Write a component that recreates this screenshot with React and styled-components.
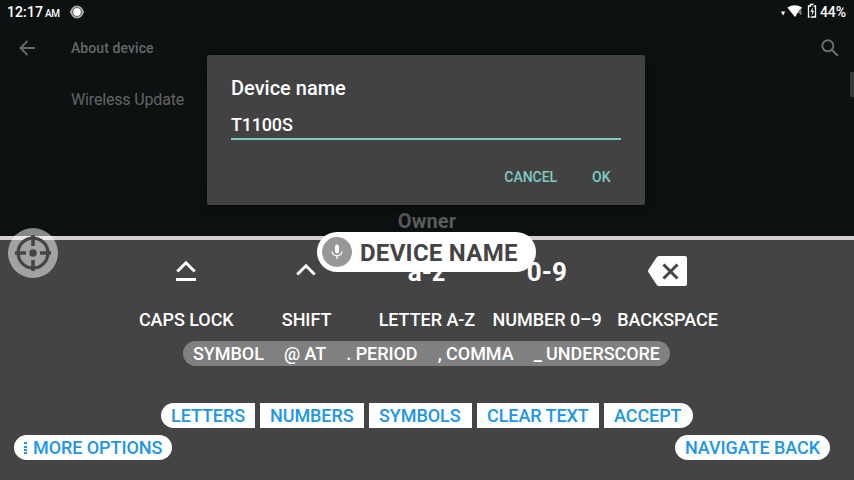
import React from "react";
import styled, { createGlobalStyle } from "styled-components";

const GlobalStyle = createGlobalStyle`
  * { box-sizing: border-box; }
  body { margin: 0; overflow: hidden; background: #0d1112; }
  button { border: 0; padding: 0; background: none; font: inherit; color: inherit; letter-spacing: inherit; }
`;

const Screen = styled.div`
  position: relative;
  width: 854px;
  height: 480px;
  overflow: hidden;
  display: flex;
  flex-direction: column;
  background: #0d1112;
  color: #fff;
  font-family: Roboto, sans-serif;
  font-weight: 500;
  white-space: nowrap;
`;

const StatusBar = styled.header`
  height: 24px;
  padding: 0 8px 0 7px;
  display: flex;
  align-items: center;
  justify-content: space-between;
`;

const StatusGroup = styled.div`
  display: flex;
  align-items: center;
  height: 24px;
`;

const Clock = styled.span`
  font-size: 14px;
  line-height: 24px;
  width: 38px;
  letter-spacing: 0.1px;
`;

const Meridiem = styled.span`
  font-size: 10px;
  line-height: 12px;
  width: 25px;
  padding-top: 3px;
  letter-spacing: -0.4px;
`;

const Battery = styled.span`
  font-size: 14px;
  line-height: 24px;
  width: 26px;
  letter-spacing: -0.1px;
`;

const AppBar = styled.div`
  height: 48px;
  display: flex;
  align-items: center;
  padding: 0 15px 0 18px;
  color: #666869;
`;

const AppTitle = styled.h1`
  flex: 1;
  margin: 0 0 0 35px;
  font-size: 14px;
  font-weight: 500;
  line-height: 20px;
  letter-spacing: 0.08px;
`;

const Settings = styled.main`
  height: 164px;
  padding: 18px 0 0 71px;
  color: #626465;
`;

const SettingRow = styled.div`
  font-size: 16px;
  font-weight: 400;
  line-height: 20px;
  letter-spacing: -0.16px;
`;

const Owner = styled.div`
  margin: 99px 0 0 -71px;
  text-align: center;
  font-size: 20px;
  font-weight: 700;
  line-height: 24px;
  letter-spacing: 0.1px;
  color: #5c5e5f;
`;

const ScrollThumb = styled.div`
  position: absolute;
  top: 72px;
  right: 0;
  width: 4px;
  height: 25px;
  background: #353839;
`;

const Dialog = styled.section`
  position: absolute;
  left: 207px;
  top: 55px;
  width: 438px;
  height: 150px;
  padding: 21px 24px 0;
  border-radius: 2px;
  background: #424242;
  box-shadow: 0 6px 18px rgba(0, 0, 0, 0.35);
`;

const DialogTitle = styled.h2`
  margin: 0;
  font-size: 20px;
  font-weight: 500;
  line-height: 24px;
`;

const Field = styled.div`
  height: 40px;
  padding-top: 14px;
  border-bottom: 2px solid #80cbc4;
  font-size: 18px;
  line-height: 22px;
  letter-spacing: -0.2px;
`;

const Actions = styled.div`
  display: flex;
  justify-content: flex-end;
  gap: 35px;
  padding: 27px 10.5px 0 0;
  color: #80cbc4;
  font-size: 14px;
  line-height: 20px;
  letter-spacing: -0.03px;
`;

const Keyboard = styled.section`
  height: 244px;
  border-top: 4px solid #d3d2d0;
  background: #444;
  display: flex;
  flex-direction: column;
  align-items: center;
`;

const KeyGrid = styled.div`
  display: grid;
  grid-template-columns: repeat(5, 120.3px);
  height: 101px;
  padding-top: 12px;
  margin-right: 1px;
`;

const Key = styled.button`
  display: flex;
  flex-direction: column;
  align-items: center;
`;

const KeyFace = styled.span`
  height: 38px;
  display: flex;
  align-items: center;
  justify-content: center;
`;

const KeyGlyph = styled.span`
  padding-top: 2px;
  font-size: 26px;
  font-weight: 700;
  line-height: 38px;
`;

const KeyLabel = styled.span`
  margin-top: 18px;
  padding-left: 0.8px;
  font-size: 18px;
  line-height: 24px;
  letter-spacing: -0.05px;
`;

const SymbolBar = styled.div`
  width: 487px;
  height: 25px;
  margin-right: 1px;
  border-radius: 13px;
  background: #808080;
  display: flex;
  justify-content: space-between;
  padding: 0 10px;
  font-size: 18px;
  line-height: 25px;
  letter-spacing: -0.05px;
`;

const ActionRow = styled.nav`
  display: flex;
  gap: 5px;
  margin-top: 37px;
`;

const FooterRow = styled.nav`
  width: 854px;
  display: flex;
  justify-content: space-between;
  padding: 0 24px 0 14px;
  margin-top: 7px;
`;

const Pill = styled.button`
  width: ${(p) => p.$width}px;
  height: 25px;
  padding-left: 10px;
  border-radius: ${(p) => p.$radius || "0"};
  background: #fff;
  color: #2196e8;
  display: flex;
  align-items: center;
  gap: 6px;
  font-size: 18px;
  line-height: 25px;
  letter-spacing: -0.07px;
`;

const VoicePill = styled.div`
  position: absolute;
  left: 317px;
  top: 232px;
  width: 219px;
  height: 40px;
  padding-left: 5px;
  border-radius: 20px;
  background: #fff;
  color: #444;
  display: flex;
  align-items: center;
  gap: 8px;
`;

const VoiceLabel = styled.span`
  padding-top: 2px;
  font-size: 24px;
  font-weight: 700;
  line-height: 38px;
  letter-spacing: 0.27px;
`;

const MicBadge = styled.span`
  width: 30px;
  height: 30px;
  border-radius: 50%;
  background: #979797;
  display: grid;
  place-items: center;
`;

const TargetButton = styled.button`
  position: absolute;
  left: 8px;
  top: 228px;
  width: 50px;
  height: 50px;
  border-radius: 50%;
  background: rgba(255, 255, 255, 0.5);
  display: grid;
  place-items: center;
`;

const Svg = styled.svg`
  display: block;
  flex: none;
`;

const EyeIcon = () => (
  <Svg width="14" height="14" viewBox="0 0 14 14">
    <circle cx="7" cy="7" r="5.5" fill="none" stroke="#a9abab" strokeWidth="2" />
    <path d="M0 7h2M12 7h2" stroke="#a9abab" strokeWidth="2" />
    <circle cx="7" cy="7" r="3.900" fill="#fff" />
  </Svg>
);

const SignalIcons = () => (
  <Svg width="39" height="24" viewBox="0 0 39 24">
    <path d="M0 11.500h4.200l-2.100 4z" fill="#fff" />
    <path d="M6.300 7.500Q13.800 3 21 7.500L14 17z" fill="#fff" />
    <path d="M20.300 9.500v6M20.300 9.500l-3 4h4" stroke="#0d1112" strokeWidth="2" fill="none" />
    <path d="M19.800 9.500v5.500M19.800 9.500l-2.500 3.500h3.500" stroke="#aaa" strokeWidth=".8" fill="none" />
    <path d="M27.500 6h2V4.500h3V6h2v11h-7z" fill="none" stroke="#fff" strokeWidth="1.300" />
    <path d="M33.500 4 28 11.500M34 10.500l-5.500 7.500" stroke="#0d1112" strokeWidth="1.200" />
    <path d="M32.300 6.800l-3 5h2l-.8 4 2.800-5h-2z" fill="#fff" />
  </Svg>
);

const BackIcon = () => (
  <Svg width="18" height="18" viewBox="0 0 18 18" fill="none" stroke="#666869" strokeWidth="2">
    <path d="M17 9H3M9.500 2 2.500 9l7 7" />
  </Svg>
);

const SearchIcon = () => (
  <Svg width="18" height="18" viewBox="0 0 18 18" fill="none" stroke="#6b6d6e" strokeWidth="2">
    <circle cx="6.800" cy="6.800" r="5.500" />
    <path d="m10.800 10.800 6 6" />
  </Svg>
);

const CapsIcon = () => (
  <Svg width="20" height="22" viewBox="0 0 20 22" fill="none" stroke="#fff" strokeWidth="3">
    <path d="m1.300 11.500 8.700-8.700 8.700 8.700M0 19.500h20" />
  </Svg>
);

const ShiftIcon = () => (
  <Svg width="20" height="16" viewBox="0 0 20 16" fill="none" stroke="#fff" strokeWidth="3">
    <path d="m1.300 11.500 8.700-8.700 8.700 8.700" />
  </Svg>
);

const BackspaceIcon = () => (
  <Svg width="39" height="30" viewBox="0 0 39 30">
    <path d="M11 0H37q2 0 2 2v26q0 2-2 2H11Q9.500 30 8.500 28.500L.6 16.500Q-.4 15 .6 13.500L8.500 1.500Q9.500 0 11 0z" fill="#fff" />
    <path d="m15.500 8.500 14 14m0-14-14 14" stroke="#444" strokeWidth="3" />
  </Svg>
);

const MicIcon = () => (
  <Svg width="12" height="16" viewBox="0 0 12 16">
    <rect x="4" y="0.500" width="4" height="9" rx="2" fill="#fff" />
    <path d="M1.200 7.500a4.800 4.300 0 0 0 9.600 0M6 12v3" stroke="#fff" strokeWidth="1.300" fill="none" />
  </Svg>
);

const TargetIcon = () => (
  <Svg width="36" height="36" viewBox="0 0 36 36" fill="none" stroke="#444">
    <circle cx="18" cy="18" r="14.900" strokeWidth="3.200" />
    <path d="M18 0v11M18 25v11M0 18h11M25 18h11" strokeWidth="3.600" />
    <circle cx="18" cy="18" r="3.700" fill="#444" stroke="none" />
  </Svg>
);

const DotsIcon = () => (
  <Svg width="3" height="13" viewBox="0 0 3 13" fill="#2196e8">
    <path d="M0 1h3v2H0zM0 5h3v2H0zM0 8h3v2H0zM0 11h3v2H0z" />
  </Svg>
);

const keys = [
  [<CapsIcon />, "CAPS LOCK"],
  [<ShiftIcon />, "SHIFT"],
  [<KeyGlyph>a-z</KeyGlyph>, "LETTER A-Z"],
  [<KeyGlyph>0-9</KeyGlyph>, "NUMBER 0–9"],
  [<BackspaceIcon />, "BACKSPACE"],
];

const symbols = ["SYMBOL", "@ AT", ". PERIOD", ", COMMA", "_ UNDERSCORE"];

const commands = [
  { label: "LETTERS", width: 94, radius: "13px 0 0 13px" },
  { label: "NUMBERS", width: 104 },
  { label: "SYMBOLS", width: 103 },
  { label: "CLEAR TEXT", width: 122 },
  { label: "ACCEPT", width: 89, radius: "0 13px 13px 0" },
];

export default function App() {
  return (
    <>
      <GlobalStyle />
      <Screen>
        <StatusBar>
          <StatusGroup>
            <Clock>12:17</Clock>
            <Meridiem>AM</Meridiem>
            <EyeIcon />
          </StatusGroup>
          <StatusGroup>
            <SignalIcons />
            <Battery>44%</Battery>
          </StatusGroup>
        </StatusBar>
        <AppBar>
          <BackIcon />
          <AppTitle>About device</AppTitle>
          <SearchIcon />
        </AppBar>
        <Settings>
          <SettingRow>Wireless Update</SettingRow>
          <Owner>Owner</Owner>
        </Settings>
        <Keyboard>
          <KeyGrid>
            {keys.map(([face, label]) => (
              <Key key={label}>
                <KeyFace>{face}</KeyFace>
                <KeyLabel>{label}</KeyLabel>
              </Key>
            ))}
          </KeyGrid>
          <SymbolBar>
            {symbols.map((s) => (
              <span key={s}>{s}</span>
            ))}
          </SymbolBar>
          <ActionRow>
            {commands.map((c) => (
              <Pill key={c.label} $width={c.width} $radius={c.radius}>
                {c.label}
              </Pill>
            ))}
          </ActionRow>
          <FooterRow>
            <Pill $width={158} $radius="13px">
              <DotsIcon />
              MORE OPTIONS
            </Pill>
            <Pill $width={155} $radius="13px">
              NAVIGATE BACK
            </Pill>
          </FooterRow>
        </Keyboard>
        <ScrollThumb />
        <Dialog>
          <DialogTitle>Device name</DialogTitle>
          <Field>T1100S</Field>
          <Actions>
            <button>CANCEL</button>
            <button>OK</button>
          </Actions>
        </Dialog>
        <VoicePill>
          <MicBadge>
            <MicIcon />
          </MicBadge>
          <VoiceLabel>DEVICE NAME</VoiceLabel>
        </VoicePill>
        <TargetButton>
          <TargetIcon />
        </TargetButton>
      </Screen>
    </>
  );
}
